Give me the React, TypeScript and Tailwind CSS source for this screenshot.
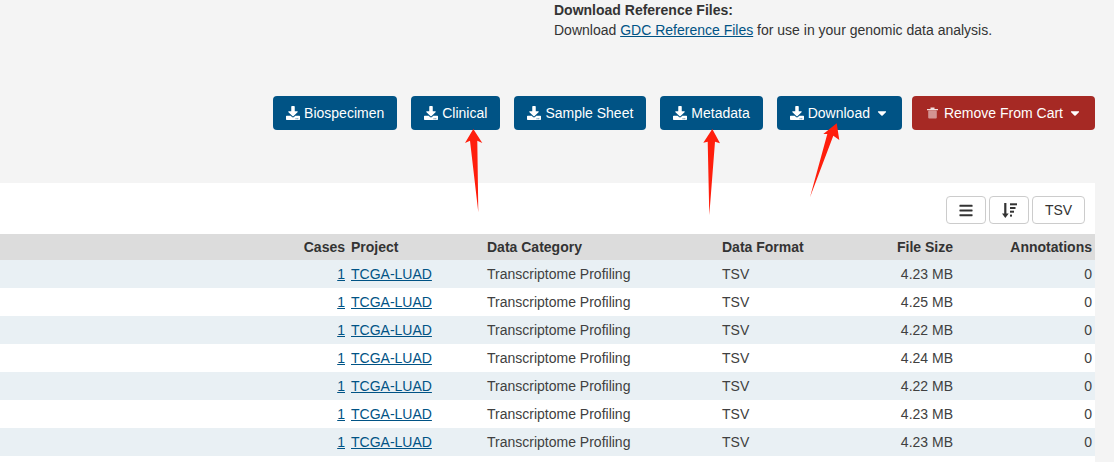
import React from "react";
import { FaDownload, FaCaretDown, FaBars } from "react-icons/fa";

const rows = ["4.23 MB", "4.25 MB", "4.22 MB", "4.24 MB", "4.22 MB", "4.23 MB", "4.23 MB"];

function Btn({ label, caret, className = "" }: { label: string; caret?: boolean; className?: string }) {
  return (
    <button className={`h-[34px] pl-[13px] ${caret ? "pr-[14px]" : "pr-[13px]"} rounded-[4px] bg-[#005385] text-white text-[14px] flex items-center ${className}`}>
      <FaDownload className="w-[14px] h-[14px] mr-[4px]" />
      <span>{label}</span>
      {caret && <FaCaretDown className="w-[12px] h-[14px] ml-[6px]" />}
    </button>
  );
}

function SortIcon() {
  return (
    <svg width="15" height="15" viewBox="0 0 15 15" fill="#333">
      <path d="M2.2 0h2.2v10.5h2.3L3.3 15 0 10.5h2.2z" />
      <rect x="8" y="0.3" width="7" height="2" />
      <rect x="8" y="4" width="5.5" height="2" />
      <rect x="8" y="7.7" width="4" height="2" />
      <rect x="8" y="11.6" width="2" height="2" />
    </svg>
  );
}

function TrashIcon() {
  return (
    <svg width="11" height="12" viewBox="0 0 11 12" className="mr-[6px]">
      <path d="M0 2h11v1.2H0zM3.5 0.5h4V2h-4z" fill="#fff" fillOpacity="0.85" />
      <rect x="1.2" y="3.6" width="8.6" height="8" rx="1" fill="#fff" fillOpacity="0.5" />
    </svg>
  );
}

export default function App() {
  return (
    <div className="relative h-[462px] w-[1114px] overflow-hidden bg-[#f4f4f4] font-['Liberation_Sans',Arial,sans-serif] text-[14px] text-[#333]">
      <div className="pl-[554px] leading-[20px] h-[96px]">
        <div className="font-bold">Download Reference Files:</div>
        <div>
          Download <a className="text-[#005385] underline">GDC Reference Files</a> for use in your genomic data analysis.
        </div>
      </div>

      <div className="flex justify-end pr-[19px]">
        <Btn label="Biospecimen" className="mr-[14px]" />
        <Btn label="Clinical" className="mr-[14px]" />
        <Btn label="Sample Sheet" className="mr-[14px]" />
        <Btn label="Metadata" className="mr-[14px]" />
        <Btn label="Download" caret className="mr-[10px]" />
        <button className="h-[34px] pl-[15px] pr-[14px] rounded-[4px] bg-[#a62924] text-white text-[14px] flex items-center">
          <TrashIcon />
          <span>Remove From Cart</span>
          <FaCaretDown className="w-[12px] h-[14px] ml-[6px]" />
        </button>
      </div>

      <div className="mt-[53px] mr-[19px] bg-white h-[279px]">
        <div className="flex justify-end gap-[3px] pt-[13px] pr-[10px] h-[51px]">
          <button className="w-[40px] h-[28px] rounded-[4px] border border-[#ccc] flex items-center justify-center">
            <FaBars className="w-[14px] h-[15px] text-[#333]" />
          </button>
          <button className="w-[40px] h-[28px] rounded-[4px] border border-[#ccc] flex items-center justify-center">
            <SortIcon />
          </button>
          <button className="w-[53px] h-[28px] rounded-[4px] border border-[#ccc] text-[#333] text-[14px]">TSV</button>
        </div>
        <table className="w-[1095px] table-fixed border-collapse">
          <colgroup>
            <col className="w-[348px]" />
            <col className="w-[136px]" />
            <col className="w-[235px]" />
            <col className="w-[120px]" />
            <col className="w-[117px]" />
            <col className="w-[139px]" />
          </colgroup>
          <thead>
            <tr className="h-[26px] bg-[#dcdcdc] font-bold">
              <th className="px-[3px] text-right">Cases</th>
              <th className="px-[3px] text-left">Project</th>
              <th className="px-[3px] text-left">Data Category</th>
              <th className="px-[3px] text-left">Data Format</th>
              <th className="px-[3px] text-right">File Size</th>
              <th className="px-[3px] text-right">Annotations</th>
            </tr>
          </thead>
          <tbody className="text-[#404040]">
            {rows.map((size, i) => (
              <tr key={i} className={`h-[28px] ${i % 2 === 0 ? "bg-[#e9f0f4]" : "bg-white"}`}>
                <td className="px-[3px] text-right">
                  <a className="text-[#005385] underline">1</a>
                </td>
                <td className="px-[3px]">
                  <a className="text-[#005385] underline">TCGA-LUAD</a>
                </td>
                <td className="px-[3px]">Transcriptome Profiling</td>
                <td className="px-[3px]">TSV</td>
                <td className="px-[3px] text-right">{size}</td>
                <td className="px-[3px] text-right">0</td>
              </tr>
            ))}
          </tbody>
        </table>
      </div>

      <svg className="absolute left-0 top-0 pointer-events-none" width="1114" height="462" fill="#ff1e0c">
        <polygon points="473.3,129 482.3,143 477.3,140.7 478.3,212.3 470,140.7 465,143" />
        <polygon points="712.3,129 720,143.3 715,141.7 709.3,215 707.7,141.7 703.3,142.7" />
        <polygon points="836.7,123.3 839.3,140 833.3,135.7 810,197.3 827.3,134 823.3,134" />
      </svg>
    </div>
  );
}
